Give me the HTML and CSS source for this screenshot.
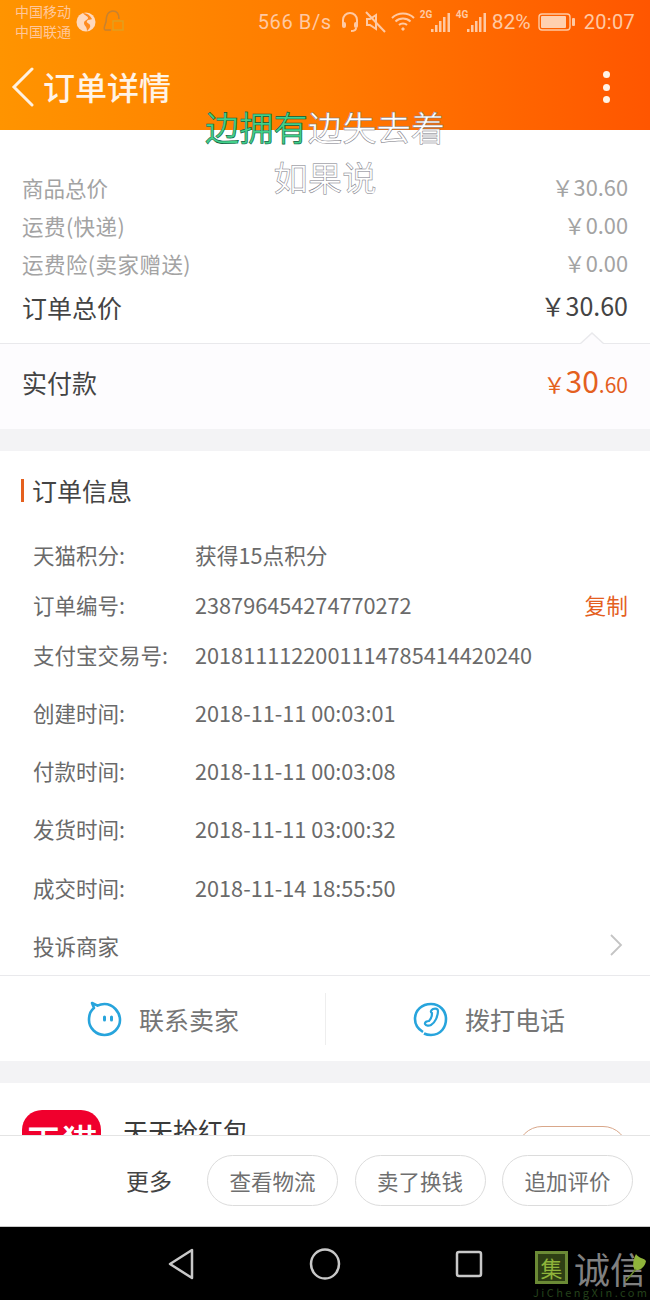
FILE: index.html
```html
<!DOCTYPE html>
<html lang="zh">
<head>
<meta charset="utf-8">
<title>订单详情</title>
<link rel="stylesheet" href="styles.css">
</head>
<body>
<div class="screen">
  <header class="top">
    <div class="status">
      <div class="status-left">
        <div class="carriers"><span>中国移动</span><span>中国联通</span></div>
        <svg class="globe" width="20" height="20" viewBox="0 0 20 20"><circle cx="10" cy="10" r="9.5" fill="#ffd9bd"/><path d="M7 1c2 3 5 3 5 5s-4 2-4 5 3 3 3 8c2-2 4-4 3-6s-4-2-3-4 4-1 5-2c-2-4-5-6-9-6z" fill="#ff8a1e"/></svg>
        <svg class="headlock" width="22" height="26" viewBox="0 0 22 26" fill="none"><path d="M2 21c-2-1 0-5 1-8 0-6 2-11 7-11s6 4 6 8" stroke="#c9822e" stroke-width="1.6"/><path d="M2 21h6" stroke="#c9822e" stroke-width="1.6"/><rect x="10" y="12" width="10" height="9" stroke="#e0a020" stroke-width="1.4"/></svg>
      </div>
      <div class="status-right">
        <span class="speed">566 B/s</span>
        <svg width="20" height="22" viewBox="0 0 20 22" fill="none" stroke="#ffc9a3" stroke-width="2"><path d="M3 13V9a7 7 0 0 1 14 0v4"/><rect x="2" y="11" width="4" height="6" rx="2" fill="#ffc9a3" stroke="none"/><rect x="14" y="11" width="4" height="6" rx="2" fill="#ffc9a3" stroke="none"/><path d="M16 17c0 2-2 3-5 3"/></svg>
        <svg width="21" height="22" viewBox="0 0 21 22" fill="none" stroke="#ffc9a3" stroke-width="2"><path d="M2 8h3l6-4v14l-6-4H2z"/><path d="M1 1l19 20"/></svg>
        <svg width="24" height="20" viewBox="0 0 24 20" fill="none" stroke="#ffc9a3" stroke-width="2"><path d="M1 6c6-6 16-6 22 0M4.500 9.500c4-4 11-4 15 0M8 13c2-2 6-2 8 0"/><path d="M12 15l2 2-2 2-2-2z" fill="#ffc9a3" stroke="none"/></svg>
        <span class="net"><i>2G</i><svg width="20" height="20" viewBox="0 0 20 20" fill="#ffc9a3"><rect x="0" y="16" width="2.500" height="3"/><rect x="4" y="12" width="2.500" height="7"/><rect x="8" y="8" width="2.500" height="11"/><rect x="12" y="4" width="2.500" height="15"/><rect x="16.500" y="0" width="2.500" height="19"/></svg></span>
        <span class="net"><i>4G</i><svg width="20" height="20" viewBox="0 0 20 20" fill="#ffc9a3"><rect x="0" y="16" width="2.500" height="3"/><rect x="4" y="12" width="2.500" height="7"/><rect x="8" y="8" width="2.500" height="11"/><rect x="12" y="4" width="2.500" height="15"/><rect x="16.500" y="0" width="2.500" height="19"/></svg></span>
        <span class="pct">82%</span>
        <svg class="battery" width="37" height="18" viewBox="0 0 37 18" fill="none"><rect x="1" y="1" width="31" height="16" rx="3" stroke="#ffc9a3" stroke-width="1.400"/><rect x="3" y="3" width="25" height="12" rx="1" fill="#ffd0b0"/><rect x="34" y="5" width="3" height="8" rx="1" fill="#ffc9a3"/></svg>
        <span class="time">20:07</span>
      </div>
    </div>
    <div class="nav">
      <svg class="back" width="24" height="40" viewBox="0 0 24 40" fill="none"><path d="M21 2L3 20l18 18" stroke="#fff1e0" stroke-width="3" stroke-linecap="round" stroke-linejoin="miter"/></svg>
      <h1 class="nav-title">订单详情</h1>
      <div class="dots"><i></i><i></i><i></i></div>
    </div>
  </header>

  <section class="prices">
    <div class="price-row"><span>商品总价</span><span class="num">￥30.60</span></div>
    <div class="price-row"><span class="paren">运费(快递)</span><span class="num">￥0.00</span></div>
    <div class="price-row"><span class="paren">运费险(卖家赠送)</span><span class="num">￥0.00</span></div>
    <div class="price-total"><span>订单总价</span><span class="num">￥30.60</span></div>
    <div class="caret"></div>
  </section>

  <section class="paid">
    <span>实付款</span>
    <span class="paid-num"><small class="yen">￥</small><b>30</b><small>.60</small></span>
  </section>

  <div class="gap"></div>

  <section class="info">
    <h2 class="info-title">订单信息</h2>
    <div class="info-row"><span class="lbl">天猫积分:</span><span>获得15点积分</span></div>
    <div class="info-row"><span class="lbl">订单编号:</span><span>238796454274770272</span><a class="copy">复制</a></div>
    <div class="info-row"><span class="lbl">支付宝交易号:</span><span>2018111122001114785414420240</span></div>
    <div class="info-row tall first"><span class="lbl">创建时间:</span><span>2018-11-11 00:03:01</span></div>
    <div class="info-row tall"><span class="lbl">付款时间:</span><span>2018-11-11 00:03:08</span></div>
    <div class="info-row tall"><span class="lbl">发货时间:</span><span>2018-11-11 03:00:32</span></div>
    <div class="info-row tall"><span class="lbl">成交时间:</span><span>2018-11-14 18:55:50</span></div>
    <div class="info-row tall"><span class="lbl">投诉商家</span>
      <svg class="chev" width="14" height="22" viewBox="0 0 14 22" fill="none"><path d="M2 1l10 10L2 21" stroke="#c4c4c4" stroke-width="1.800"/></svg>
    </div>
  </section>

  <section class="contact">
    <div class="contact-item">
      <svg width="36" height="36" viewBox="0 0 36 36" fill="none"><path d="M7 7C3 10 2 14 2 19c0 8 7 15 15.500 15S33 27 33 19 26 3 17.500 3c-3 0-5 .6-7 1.700L5 2z" stroke="#27a4dc" stroke-width="2.600" stroke-linejoin="round"/><rect x="16" y="14.500" width="3" height="6" rx="1.500" fill="#27a4dc"/><rect x="23" y="14.500" width="3" height="6" rx="1.500" fill="#27a4dc"/></svg>
      <span>联系卖家</span>
    </div>
    <div class="contact-item">
      <svg width="36" height="36" viewBox="0 0 36 36" fill="none"><path d="M10 31C5 28 2 24 2 18 2 9 9 3 18 3s15 7 15 15-5 16-15 16c-3 0-5-.5-7-1.500" stroke="#27a4dc" stroke-width="2.600"/><path d="M20 8c3-1 5 0 5 2 0 5-3 12-7 14-2 1-5 1-6-1-.5-2 2-3 4-3 2-2 3-5 3-8-2-1-1-3 1-4z" stroke="#27a4dc" stroke-width="2.200" stroke-linejoin="round"/></svg>
      <span>拨打电话</span>
    </div>
  </section>

  <div class="gap"></div>

  <section class="shop">
    <div class="shop-logo">天猫</div>
    <div class="shop-name">天天抢红包</div>
    <div class="shop-btn"></div>
  </section>

  <footer class="actions">
    <span class="more">更多</span>
    <span class="pill">查看物流</span>
    <span class="pill">卖了换钱</span>
    <span class="pill">追加评价</span>
  </footer>

  <div class="sysnav">
    <svg width="28" height="32" viewBox="0 0 28 32" fill="none"><path d="M25 2v28L3 16z" stroke="#c8c8c8" stroke-width="2.500" stroke-linejoin="round"/></svg>
    <svg width="32" height="32" viewBox="0 0 32 32" fill="none"><ellipse cx="16" cy="16" rx="14" ry="14.500" stroke="#c8c8c8" stroke-width="2.500"/></svg>
    <svg width="28" height="28" viewBox="0 0 28 28" fill="none"><rect x="2" y="2" width="24" height="24" rx="2" stroke="#c8c8c8" stroke-width="2.500"/></svg>
  </div>

  <div class="subs">
    <div class="sub"><span class="sub-on">边拥有</span>边失去着</div>
    <div class="sub">如果说</div>
  </div>

  <div class="mark">
    <div class="mark-top">
      <span class="mark-box">集</span>
      <span class="mark-text">诚信</span>
      <svg class="mark-leaf" width="22" height="30" viewBox="0 0 22 30"><path d="M11 2c2 4 8 4 10 7-1 6-6 10-11 9-3-4-2-10 1-16z" fill="#8fb43a"/><path d="M1 29c3-4 6-7 10-12" stroke="#6c8a2c" stroke-width="1.500" fill="none"/></svg>
    </div>
    <div class="mark-url">JiChengXin.com</div>
  </div>
</div>
</body>
</html>
```

FILE: styles.css
```css
* { box-sizing: border-box; }
html, body { margin: 0; padding: 0; background: #fff; }
body { font-family: "Noto Sans CJK SC", sans-serif; }
.screen { position: relative; width: 650px; height: 1300px; overflow: hidden; display: flex; flex-direction: column; background: #fff; }

/* header */
.top { height: 130px; flex: none; background: linear-gradient(90deg, #ff9400 0%, #ff7a00 50%, #ff5600 100%); }
.status { height: 44px; display: flex; justify-content: space-between; align-items: center; padding: 0 15px; color: #ffc9a3; font-family: Roboto, "Noto Sans CJK SC", sans-serif; }
.status-left, .status-right { display: flex; align-items: center; }
.carriers { display: flex; flex-direction: column; font-size: 14px; line-height: 20px; width: 57px; color: #ffc79a; white-space: nowrap; }
.globe { margin-left: 4px; }
.headlock { margin-left: 7px; }
.status-right { gap: 5px; }
.speed { font-size: 20px; letter-spacing: .6px; margin-right: 3px; }
.net { position: relative; display: block; width: 31px; height: 24px; }
.net i { position: absolute; left: 0; top: 0; font-size: 10px; font-style: normal; font-weight: 700; line-height: 10px; }
.net svg { position: absolute; right: 0; bottom: 1px; }
.pct { font-size: 21px; }
.battery { margin-left: 2px; }
.time { font-size: 20px; letter-spacing: .3px; margin-left: 4px; }
.nav { height: 86px; display: flex; align-items: center; padding: 0 0 0 11px; }
.back { margin-right: 8px; flex: none; }
.nav-title { margin: 0 0 2px; font-size: 32px; font-weight: 500; color: #fff3e6; line-height: 40px; flex: 1; }
.dots { display: flex; flex-direction: column; gap: 5.500px; width: 7px; margin-right: 40px; }
.dots i { display: block; width: 7px; height: 7px; border-radius: 50%; background: #fff3e6; }

/* prices */
.prices { position: relative; flex: none; height: 214px; padding: 38px 22px 0; border-bottom: 1px solid #e9e9ec; color: #a3a3a3; }
.price-row { height: 38px; display: flex; justify-content: space-between; align-items: center; font-size: 21.500px; }
.paren { letter-spacing: .45px; }
.price-total { height: 50px; display: flex; justify-content: space-between; align-items: center; font-size: 25px; color: #444; }
.num { font-size: 21.800px; margin-bottom: 2px; }
.price-total .num { font-size: 25px; margin-bottom: 5px; }
.caret { position: absolute; right: 45px; bottom: -1px; width: 0; height: 0; border-left: 13px solid transparent; border-right: 13px solid transparent; border-bottom: 12px solid #e9e9ec; }
.caret::after { content: ""; position: absolute; left: -11px; top: 2px; border-left: 11px solid transparent; border-right: 11px solid transparent; border-bottom: 10px solid #fdfcfe; }

/* paid */
.paid { flex: none; height: 85px; display: flex; justify-content: space-between; align-items: center; padding: 0 22px 10px; background: #fdfcfe; font-size: 25px; color: #444; }
.paid-num { color: #e4601f; display: flex; align-items: baseline; margin-bottom: 4px; }
.paid-num b { font-size: 30px; font-weight: 400; }
.paid-num small { font-size: 21px; }
.paid-num .yen { font-size: 22px; }

.gap { flex: none; height: 22px; background: #f3f3f5; }

/* order info */
.info { flex: none; height: 524px; padding: 0 22px 0 33px; color: #6a6a6a; font-size: 21.700px; }
.info-title { position: relative; margin: 0 0 0 -1px; height: 78px; line-height: 78px; font-size: 25px; font-weight: 400; color: #444; }
.info-title::before { content: ""; position: absolute; left: -11px; top: 28px; width: 3px; height: 23px; background: #e5601e; }
.info-row { height: 50px; display: flex; align-items: center; }
.info-row.tall { height: 58.300px; }
.info-row.first { margin-top: 4px; }
.lbl { width: 162px; flex: none; font-size: 21.500px; }
.copy { margin-left: auto; color: #e4601f; }
.chev { margin-left: auto; margin-right: 5px; }

/* contact */
.contact { flex: none; height: 86px; border-top: 1px solid #e9e9ec; display: grid; grid-template-columns: 326px 324px; align-items: center; font-size: 25px; color: #757575; }
.contact-item { height: 52px; display: flex; align-items: center; justify-content: center; gap: 16px; }
.contact-item:first-child { padding-left: 1px; border-right: 1px solid #eeeeee; }
.contact-item:last-child { padding-left: 2px; }

/* shop */
.shop { flex: 1; min-height: 0; position: relative; display: flex; padding: 27px 22px 0; overflow: hidden; }
.shop-logo { width: 79px; height: 79px; flex: none; border-radius: 20px; background: #f0002d; color: #fff; font-size: 36px; font-weight: 500; line-height: 36px; padding-top: 12px; text-align: center; }
.shop-name { margin-left: 22px; font-size: 25px; line-height: 36px; color: #3a3a3a; padding-top: 2px; }
.shop-btn { margin-left: auto; margin-top: 16px; width: 111px; height: 50px; border: 1px solid #d9a78a; border-radius: 25px; }

/* actions */
.actions { flex: none; height: 92px; border-top: 1px solid #e4e4e4; border-bottom: 1px solid #c9c9c9; background: #fff; display: flex; align-items: center; padding: 0 17px 2px 126px; }
.more { flex: none; width: 46px; white-space: nowrap; font-size: 23px; color: #444; margin-right: 35px; }
.pill { flex: none; width: 131px; height: 51px; border: 1px solid #dcdcdc; border-radius: 26px; display: flex; align-items: center; justify-content: center; font-size: 21.500px; color: #6f6f6f; margin-right: 16.500px; }
.pill:last-child { margin-right: 0; }

/* system nav */
.sysnav { flex: none; height: 73px; background: #000; display: grid; grid-template-columns: 145px 144px 144px; justify-items: center; align-items: center; padding-left: 108px; }

/* overlays */
.subs { position: absolute; left: 0; right: 0; top: 101px; text-align: center; font-size: 34.300px; line-height: 50px; color: #fff; }
.sub { -webkit-text-stroke: .5px #777782; }
.sub-on { color: #41d08a; -webkit-text-stroke: .6px #0b5c3c; }
.mark { position: absolute; left: 533px; top: 1249px; width: 117px; }
.mark-top { position: relative; display: flex; align-items: center; height: 37px; }
.mark-box { width: 33px; height: 33px; border: 3px solid #6b8a35; background: #2e3f14; color: #8fb43a; font-size: 22px; line-height: 26px; text-align: center; flex: none; margin-left: 2px; }
.mark-text { margin-left: 6px; font-size: 36px; line-height: 36px; color: #808080; white-space: nowrap; }
.mark-leaf { position: absolute; left: 92px; top: 3px; }
.mark-url { font-size: 11px; line-height: 13px; letter-spacing: 2.400px; color: #24401b; white-space: nowrap; }
```
